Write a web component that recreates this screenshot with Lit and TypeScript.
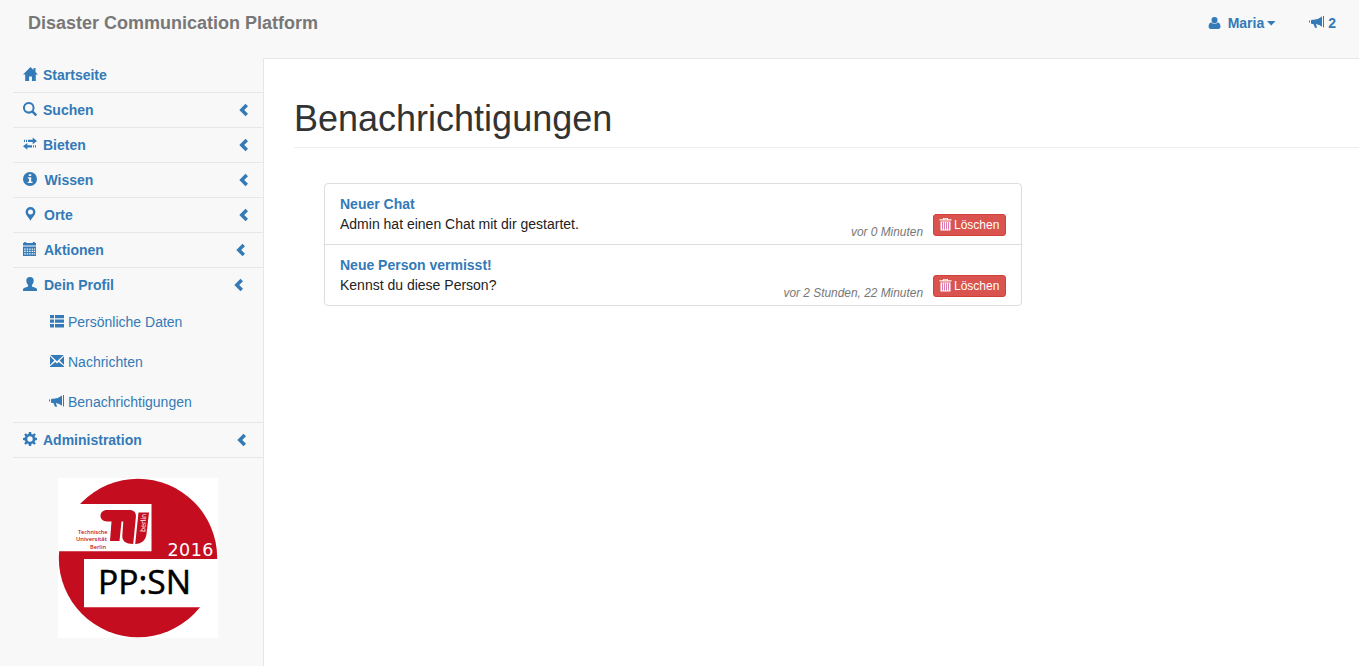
import { LitElement, html, css, svg, nothing } from "lit";
import { customElement, property } from "lit/decorators.js";

const glyphs: Record<string, unknown> = {
  home: svg`<path d="M7.5 0 0 7.500h2.200V14h3.900V9.500h2.800V14h3.900V7.500H15L12.500 5V1h-2v2z"/>`,
  search: svg`<path fill-rule="evenodd" d="M5.800 0a5.800 5.800 0 1 0 3.100 10.700l3 3q.6.500 1.200 0l.6-.6q.5-.6 0-1.200l-3-3A5.800 5.800 0 0 0 5.800 0Zm0 2a3.800 3.800 0 1 1 0 7.600 3.800 3.800 0 0 1 0-7.600Z"/>`,
  transfer: svg`<path d="M9.700.5 14 3.900 9.700 7.200V5H5V2.800h4.700zM1 2.800h1V5H1zM3 2.800h1V5H3zM4.300 6 0 9.300l4.300 3.400v-2.300H9V8.200H4.300zM10 8.200h1v2.200h-1zM12 8.200h1v2.200h-1z"/>`,
  info: svg`<path fill-rule="evenodd" d="M7 0a7 7 0 1 0 0 14A7 7 0 0 0 7 0ZM5.800 2.200h2.400v1.900H5.800ZM4.800 5.300h3.400v4.500h1.300v1.200H4.700V9.800H6V6.500H4.800Z"/>`,
  marker: svg`<path fill-rule="evenodd" d="M7.500 0a4.900 4.900 0 0 0-4.900 4.900C2.600 8 5.600 10.100 7.500 13.700 9.400 10.100 12.400 8 12.400 4.900A4.900 4.900 0 0 0 7.500 0Zm0 2.400a2.500 2.500 0 1 1 0 5 2.500 2.500 0 0 1 0-5Z"/>`,
  calendar: svg`<path d="M0 1h1.200V0h2v1h6.600V0h2v1H13v2H0z"/><path opacity=".5" d="M0 3h13v2H0z"/><path fill-rule="evenodd" d="M0 5h13v9H0ZM1.200 6.500v1.200h1.500V6.500Zm2.500 0v1.200h1.500V6.500Zm2.500 0v1.200h1.500V6.500Zm2.500 0v1.200h1.500V6.500Zm2.300 0v1.200h1.200V6.500ZM1.200 8.800V10h1.500V8.800Zm2.500 0V10h1.500V8.800Zm2.500 0V10h1.500V8.800Zm2.500 0V10h1.500V8.800Zm2.300 0V10h1.200V8.800ZM1.200 11.200v1.200h1.500v-1.200Zm2.500 0v1.200h1.500v-1.200Zm2.500 0v1.200h1.500v-1.200Zm2.500 0v1.200h1.500v-1.200Zm2.300 0v1.200h1.200v-1.200Z"/>`,
  user: svg`<path d="M7 0C4.500 0 3.300 1.300 3.300 3.400c0 1 .1 1.600.4 2.300.2.800.7 1.600 1.400 2.200v1.500L1 11.100Q0 11.600 0 12.700V14h14v-1.300q0-1.100-1-1.600L8.900 9.400V7.900c.7-.6 1.200-1.400 1.400-2.200.3-.7.400-1.300.400-2.300C10.700 1.300 9.500 0 7 0Z"/>`,
  list: svg`<path d="M0 1h4v3.300H0zM5 1h9v3.300H5zM0 5.500h4v3.300H0zM5 5.500h9v3.300H5zM0 10h4v3.500H0zM5 10h9v3.500H5z"/>`,
  envelope: svg`<path d="M.3 1h13.400L7 7.300zM0 2.300l4.300 4.300L0 11zM14 2.300V11L9.700 6.600zM5.300 7.900 7 9.500l1.700-1.600L10 9l4 3.300V13H0v-.7L4 9z"/>`,
  horn: svg`<path d="M14 1h1v11.500h-1zM13 1.500v10.300Q10.500 9.500 6.900 9.100l1.200 3.700H6L4.400 9H2.500L2 8V5.700l.5-.9H4.500Q9.500 4.500 13 1.500ZM0 5.500h1v2H0z"/>`,
  cog: svg`<path fill-rule="evenodd" d="m5.900 0h2.200l.4 2 1.200.5L11.400 1.300 12.800 2.700 11.600 4.300l.5 1.200 1.900.4v2.200l-1.900.4-.5 1.200 1.200 1.600-1.400 1.400-1.700-1.200-1.200.5-.4 2H5.900l-.4-2-1.200-.5-1.700 1.200-1.400-1.400 1.200-1.600-.5-1.200L0 8.100V5.900l1.900-.4.500-1.200L1.200 2.700l1.400-1.400 1.700 1.200L5.500 2ZM7 4.300a2.700 2.700 0 1 0 0 5.400 2.700 2.700 0 0 0 0-5.400Z"/>`,
  chevron: svg`<path d="M6.500.8 9 3.200 5.200 7 9 10.800 6.500 13.200.3 7z"/>`,
  person: svg`<path d="M5.500 1a3 3 0 0 1 3 3.200c0 1.800-1.200 3.200-3 3.200S2.500 6 2.500 4.200A3 3 0 0 1 5.500 1ZM2.600 6.500Q3.700 8.100 5.500 8.100T8.400 6.500C10.600 6.500 11.500 8.500 11.500 10.800 11.500 12 10.700 13 9.300 13H1.700C.4 13-.4 12-.4 10.800-.4 8.500.4 6.500 2.600 6.500Z"/>`,
  caret: svg`<path d="M0 5h8.500L4.250 9.400z"/>`,
  trash: svg`<path fill-rule="evenodd" d="M3 0h5v1.200h3.500v1.300H-.5V1.200H3ZM4 .8v.4h3V.8ZM.5 3.500h10V12.500H.5Z"/><path d="M2.500 4.200v7.300M4.500 4.200v7.300M6.500 4.200v7.300M8.500 4.200v7.300" stroke="#d56ca8" stroke-width=".9"/>`,
};

@customElement("ui-icon")
export class UiIcon extends LitElement {
  @property() name = "";
  @property({ type: Number }) width = 14;
  static styles = css`
    :host { display: block; flex: none; }
    svg { display: block; fill: currentColor; overflow: visible; }
  `;
  render() {
    return html`<svg width=${this.width} height="14" viewBox="0 0 ${this.width} 14">${glyphs[this.name]}</svg>`;
  }
}

@customElement("project-logo")
export class ProjectLogo extends LitElement {
  static styles = css`
    :host { display: block; width: 160px; height: 160px; }
    svg { display: block; }
    .red { fill: #c40e20; }
    .white { fill: #fff; }
    .small { font: 600 5.500px "Open Sans", sans-serif; fill: #c40e20; }
    .berlin { font: 7px "DejaVu Sans", sans-serif; fill: #fff; }
    .year { font: 17.500px "DejaVu Sans", sans-serif; fill: #fff; }
    .name { font: 33px "Open Sans", sans-serif; fill: #000; stroke: #000; stroke-width: .5px; }
  `;
  render() {
    return html`<svg width="160" height="160" viewBox="0 0 160 160">
      <rect class="white" width="160" height="160"/>
      <circle class="red" cx="80" cy="80" r="79.200"/>
      <path class="white" d="M0 26h93.500v47.300H0zM26 81h134v48.200H26z"/>
      <path class="red" d="M49 32H71c5 0 7.300 2.500 6.900 7L75.200 66C68 66 64 63 64.300 58L65.300 43.500H49c-4 0-6.500-2.500-6.500-5.700S45 32 49 32ZM53.500 43.500h10L61.500 63H52zM80.500 34.500h10.500L88.500 56c-.7 6-4.500 9.800-11.300 10z"/>
      <text class="small" x="49.500" y="56" text-anchor="end" textLength="29.500" lengthAdjust="spacingAndGlyphs">Technische</text>
      <text class="small" x="49" y="63.300" text-anchor="end" textLength="31" lengthAdjust="spacingAndGlyphs">Universität</text>
      <text class="small" x="48" y="70.500" text-anchor="end" textLength="16" lengthAdjust="spacingAndGlyphs">Berlin</text>
      <text class="berlin" transform="translate(87.300 54) rotate(-87)" textLength="18" lengthAdjust="spacingAndGlyphs">berlin</text>
      <text class="year" x="109.500" y="78" textLength="46">2016</text>
      <text class="name" x="40" y="116" textLength="93" lengthAdjust="spacingAndGlyphs">PP:SN</text>
    </svg>`;
  }
}

interface Entry { icon: string; width: number; gap: number; label: string; arrow?: number; children?: { icon: string; width: number; label: string }[]; }

const entries: Entry[] = [
  { icon: "home", width: 15, gap: 5, label: "Startseite" },
  { icon: "search", width: 14, gap: 6, label: "Suchen", arrow: 15 },
  { icon: "transfer", width: 14, gap: 6, label: "Bieten", arrow: 15 },
  { icon: "info", width: 14, gap: 7.5, label: "Wissen", arrow: 15 },
  { icon: "marker", width: 14, gap: 7, label: "Orte", arrow: 15 },
  { icon: "calendar", width: 14, gap: 7, label: "Aktionen", arrow: 18 },
  {
    icon: "user", width: 14, gap: 7, label: "Dein Profil", arrow: 20,
    children: [
      { icon: "list", width: 14, label: "Persönliche Daten" },
      { icon: "envelope", width: 14, label: "Nachrichten" },
      { icon: "horn", width: 15, label: "Benachrichtigungen" },
    ],
  },
  { icon: "cog", width: 14, gap: 6, label: "Administration", arrow: 17 },
];

const messages = [
  { title: "Neuer Chat", text: "Admin hat einen Chat mit dir gestartet.", time: "vor 0 Minuten" },
  { title: "Neue Person vermisst!", text: "Kennst du diese Person?", time: "vor 2 Stunden, 22 Minuten" },
];

@customElement("app-root")
export class AppRoot extends LitElement {
  static styles = css`
    :host {
      display: flex; flex-direction: column; height: 666px; overflow: hidden;
      background: #f8f8f8; color: #222;
      font: 14px/20px "Liberation Sans", Arial, sans-serif;
    }
    * { box-sizing: border-box; }
    a { color: #337ab7; text-decoration: none; cursor: pointer; }
    header { display: flex; justify-content: space-between; height: 58px; padding: 13px 23px 0 28px; flex: none; }
    .brand { font-size: 18px; font-weight: bold; color: #777; line-height: 20px; }
    .tools { display: flex; gap: 33px; font-weight: bold; }
    .tools a { display: flex; height: 20px; align-items: center; }
    .name { margin: 0 3px 0 8px; }
    .count { margin-left: 4px; }
    .horn { margin-bottom: 2px; }
    .body { display: flex; flex: 1; min-height: 0; }
    nav { width: 263px; padding-left: 13px; flex: none; }
    .row { display: flex; align-items: center; height: 34px; padding-left: 10px; font-weight: bold; }
    .entry { border-bottom: 1px solid #e7e7e7; }
    .lead { margin-bottom: 2px; }
    .arrow { margin-left: auto; }
    .sub { display: flex; align-items: center; height: 40px; padding-left: 37px; gap: 4px; }
    .sub.wide { padding-left: 36px; }
    project-logo { margin: 20px 0 0 45px; }
    main { flex: 1; border: solid #e7e7e7; border-width: 1px 0 0 1px; background: #fff; padding: 40px 0 0 30px; min-width: 0; }
    h1 { margin: 0; padding-bottom: 9px; height: 49px; border-bottom: 1px solid #eee; font-size: 36px; line-height: 39px; color: #333; font-weight: normal; }
    .list { width: 698px; margin: 35px 0 0 30px; border: 1px solid #ddd; border-radius: 4px; }
    .item { display: flex; justify-content: space-between; height: 60px; padding: 10px 15px; }
    .item + .item { border-top: 1px solid #ddd; height: 61px; }
    .title { font-weight: bold; }
    .side { display: flex; align-items: flex-start; gap: 10px; padding-top: 20px; }
    .time { font-size: 11.900px; font-style: italic; color: #777; line-height: 17px; padding-top: 10px; white-space: nowrap; }
    button { display: flex; align-items: center; gap: 3px; width: 73px; height: 22px; padding: 0 0 0 6px; border: 1px solid #d43f3a; border-radius: 3px; background: #d9534f; color: #fff; font: 12px/18px "Liberation Sans", Arial, sans-serif; }
  `;

  render() {
    return html`
      <header>
        <a class="brand">Disaster Communication Platform</a>
        <div class="tools">
          <a><ui-icon name="person" width="11"></ui-icon><span class="name">Maria</span><ui-icon name="caret" width="9"></ui-icon></a>
          <a><ui-icon class="horn" name="horn" width="15"></ui-icon><span class="count">2</span></a>
        </div>
      </header>
      <div class="body">
        <nav>
          ${entries.map((e) => html`
            <div class="entry">
              <a class="row">
                <ui-icon class="lead" name=${e.icon} width=${e.width}></ui-icon>
                <span style="margin-left:${e.gap}px">${e.label}</span>
                ${e.arrow ? html`<ui-icon class="arrow" style="margin-right:${e.arrow}px" name="chevron" width="9"></ui-icon>` : nothing}
              </a>
              ${e.children?.map((c) => html`
                <a class="sub ${c.width > 14 ? "wide" : ""}"><ui-icon class="lead" name=${c.icon} width=${c.width}></ui-icon><span>${c.label}</span></a>`)}
            </div>`)}
          <project-logo></project-logo>
        </nav>
        <main>
          <h1>Benachrichtigungen</h1>
          <div class="list">
            ${messages.map((m) => html`
              <div class="item">
                <div><a class="title">${m.title}</a><div>${m.text}</div></div>
                <div class="side">
                  <span class="time">${m.time}</span>
                  <button><ui-icon name="trash" width="11"></ui-icon>Löschen</button>
                </div>
              </div>`)}
          </div>
        </main>
      </div>`;
  }
}
